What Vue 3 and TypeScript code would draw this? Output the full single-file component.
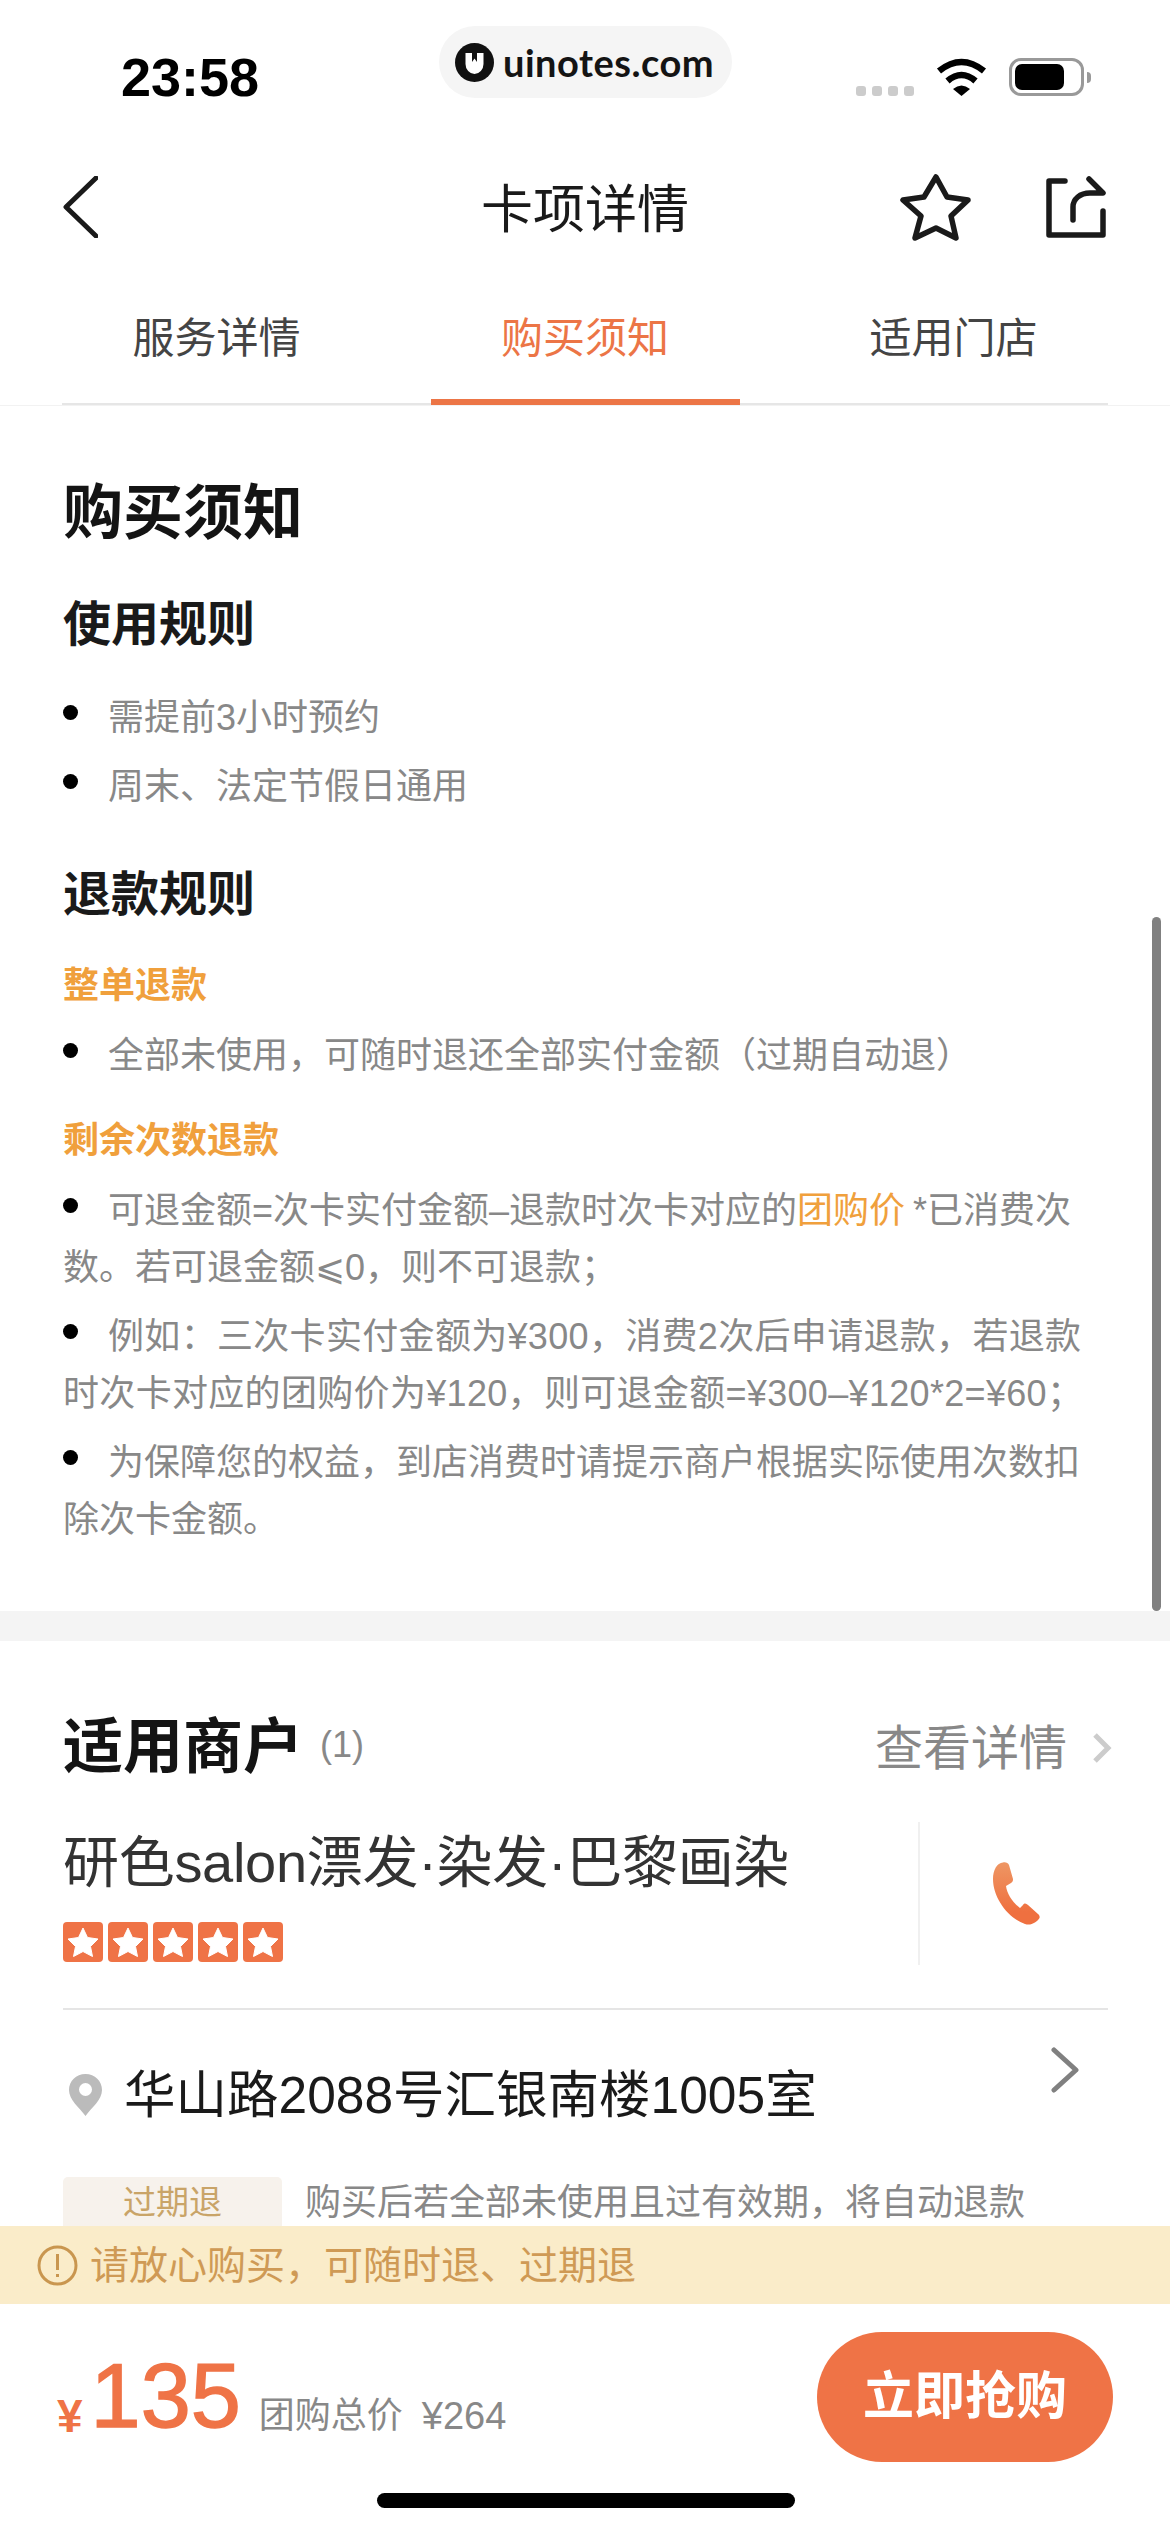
<template>
  <div class="page">
    <div class="watermark">
      <svg class="logo" width="39" height="39" viewBox="0 0 39 39">
        <circle cx="19.5" cy="19.5" r="19.5" fill="#111" />
        <path d="M10.5 10H17V19L19.5 15.5L22 19V10H28.5V21A9 10 0 0 1 10.5 21Z" fill="#fff" />
      </svg>
      <span>uinotes.com</span>
    </div>

    <div class="status-bar">
      <span class="time">23:58</span>
      <div class="status-icons">
        <div class="signal"><i v-for="n in 4" :key="n"></i></div>
        <svg width="51" height="38" viewBox="0 0 51 38">
          <path d="M3 13Q25.500 -5 48 13" fill="none" stroke="#000" stroke-width="6.500" />
          <path d="M11.500 23Q25.500 11 39.500 23" fill="none" stroke="#000" stroke-width="6.500" />
          <path d="M17 31Q25.500 24 34 31L25.500 38Z" fill="#000" />
        </svg>
        <div class="battery"><div class="level"></div></div>
      </div>
    </div>

    <div class="nav">
      <svg width="35" height="62" viewBox="0 0 35 62">
        <path d="M33 2L3 31L33 60" fill="none" stroke="#1a1a1a" stroke-width="5" stroke-linecap="round" stroke-linejoin="round" />
      </svg>
      <span class="nav-title">卡项详情</span>
      <div class="nav-actions">
        <svg width="71" height="67" viewBox="0 0 71 67">
          <path d="M36 3L47 23L68 26L51 42L56 64L36 54L15 64L21 42L3 26L24 23Z" fill="none" stroke="#1a1a1a" stroke-width="5.500" stroke-linejoin="round" />
        </svg>
        <svg width="60" height="62" viewBox="0 0 60 62">
          <path d="M19 5H3V59H57V35" fill="none" stroke="#1a1a1a" stroke-width="5.500" stroke-linecap="round" stroke-linejoin="round" />
          <path d="M43 3L57 17H44C34 17 27 23 27 31V44" fill="none" stroke="#1a1a1a" stroke-width="5.500" stroke-linecap="round" stroke-linejoin="round" />
        </svg>
      </div>
    </div>

    <div class="tabs">
      <div v-for="t in tabs" :key="t" :class="['tab', { active: t === activeTab }]">{{ t }}</div>
    </div>

    <div class="content">
      <div class="scrollbar"></div>

      <section class="notice">
        <h2 class="big-title">购买须知</h2>
        <h3 class="rule-title first">使用规则</h3>
        <ul class="rules rules-first">
          <li><i class="dot"></i>需提前3小时预约</li>
          <li><i class="dot"></i>周末、法定节假日通用</li>
        </ul>
        <h3 class="rule-title second">退款规则</h3>
        <div class="sub-title whole">整单退款</div>
        <ul class="rules">
          <li><i class="dot"></i>全部未使用，可随时退还全部实付金额（过期自动退）</li>
        </ul>
        <div class="sub-title rest">剩余次数退款</div>
        <ul class="rules">
          <li><i class="dot"></i>可退金额=次卡实付金额–退款时次卡对应的<span class="hl">团购价</span>*已消费次数。若可退金额⩽0，则不可退款；</li>
          <li class="spaced"><i class="dot"></i>例如：三次卡实付金额为¥300，消费2次后申请退款，若退款时次卡对应的团购价为¥120，则可退金额=¥300–¥120*2=¥60；</li>
          <li><i class="dot"></i>为保障您的权益，到店消费时请提示商户根据实际使用次数扣除次卡金额。</li>
        </ul>
      </section>

      <div class="band"></div>

      <section class="merchant">
        <div class="merchant-head">
          <h2 class="big-title">适用商户</h2>
          <span class="count">(1)</span>
          <span class="more">查看详情</span>
          <svg class="more-arrow" width="20" height="30" viewBox="0 0 20 30">
            <path d="M3 2L16 15L3 28" fill="none" stroke="#ccc" stroke-width="5" />
          </svg>
        </div>

        <div class="shop">
          <div class="shop-info">
            <div class="shop-name">研色salon漂发·染发·巴黎画染</div>
            <div class="stars">
              <span v-for="n in 5" :key="n" class="star">
                <svg width="32" height="30" viewBox="0 0 32 30">
                  <path d="M16 1L20.500 10.500L31 12L23.500 19.500L25.500 29.500L16 24.500L6.500 29.500L8.500 19.500L1 12L11.500 10.500Z" fill="#fff" stroke="#fff" stroke-linejoin="round" />
                </svg>
              </span>
            </div>
          </div>
          <div class="phone">
            <svg width="47" height="63" viewBox="0 0 47 63">
              <defs>
                <linearGradient id="phoneFill" x1="0" y1="0" x2="0" y2="1">
                  <stop offset="0" stop-color="#ee9663" />
                  <stop offset="0.8" stop-color="#ef7040" />
                </linearGradient>
              </defs>
              <path d="M10 0.500C4 1 0 8 0 17C0 36 15 56 32 62C38 64 44 60 46.500 56C47 54 46 53 45 52L35 43C33 41 31 41 30 43L27 46C20 41 14 32 13 24L18 21C20 20 20 18 20 17L16 3C15 1 13 0 10 0.500Z" fill="url(#phoneFill)" />
            </svg>
          </div>
        </div>

        <div class="address">
          <svg width="33" height="42" viewBox="0 0 33 42">
            <path fill-rule="evenodd" d="M16.500 0C7 0 0 7 0 16C0 26 10 33 16.500 42C23 33 33 26 33 16C33 7 26 0 16.500 0ZM16.500 9A6.500 6.500 0 1 1 16.500 22A6.500 6.500 0 1 1 16.500 9Z" fill="#bbb" />
          </svg>
          <span class="address-text">华山路2088号汇银南楼1005室</span>
          <svg class="address-arrow" width="28" height="46" viewBox="0 0 28 46">
            <path d="M3 3L25 23L3 43" fill="none" stroke="#808080" stroke-width="5" stroke-linecap="round" stroke-linejoin="round" />
          </svg>
        </div>

        <div class="refund-row">
          <span class="refund-badge">过期退</span>
          <span class="refund-text">购买后若全部未使用且过有效期，将自动退款</span>
        </div>
      </section>
    </div>

    <div class="assure">
      <svg width="41" height="41" viewBox="0 0 41 41">
        <circle cx="20.500" cy="20.500" r="18.500" fill="none" stroke="#c9964f" stroke-width="3" />
        <path d="M20.500 9V25M20.500 29V32" fill="none" stroke="#c9964f" stroke-width="3" />
      </svg>
      <span class="assure-text">请放心购买，可随时退、过期退</span>
    </div>

    <div class="buy-bar">
      <div class="price">
        <span class="currency">¥</span>
        <span class="amount">135</span>
        <span class="price-label">团购总价</span>
        <span class="price-total">¥264</span>
      </div>
      <div class="buy-btn">立即抢购</div>
      <div class="home-indicator"></div>
    </div>
  </div>
</template>

<script setup lang="ts">
const tabs = ['服务详情', '购买须知', '适用门店'];
const activeTab = '购买须知';
</script>

<style>
html, body {
  margin: 0;
  background: #fff;
}
</style>

<style scoped>
.page {
  position: relative;
  width: 1170px;
  height: 2532px;
  overflow: hidden;
  display: flex;
  flex-direction: column;
  background: #fff;
  font-family: "Liberation Sans", "Noto Sans CJK SC", sans-serif;
}

.watermark {
  position: absolute;
  left: 439px;
  top: 26px;
  width: 293px;
  height: 72px;
  box-sizing: border-box;
  padding-left: 16px;
  display: flex;
  align-items: center;
  gap: 9px;
  border-radius: 36px;
  background: #f5f5f5;
  font-family: Lato, sans-serif;
  font-size: 38px;
  font-weight: 700;
  letter-spacing: 0.5px;
  color: #141414;
}

.status-bar {
  height: 140px;
  flex: none;
  box-sizing: border-box;
  padding: 58px 86px 0 121px;
  display: flex;
  justify-content: space-between;
  align-items: flex-start;
}

.time {
  font-size: 54px;
  font-weight: 700;
  line-height: 39px;
  color: #000;
}

.status-icons {
  display: flex;
  align-items: flex-end;
  gap: 22px;
  height: 38px;
}

.signal {
  display: flex;
  gap: 6px;
}

.signal i {
  width: 10px;
  height: 10px;
  border-radius: 3px;
  background: #ccc;
}

.battery {
  position: relative;
  width: 75px;
  height: 38px;
  box-sizing: border-box;
  padding: 3px;
  border: 3px solid #999;
  border-radius: 12px;
}

.battery::after {
  content: "";
  position: absolute;
  right: -10px;
  top: 11px;
  width: 4px;
  height: 11px;
  border-radius: 0 5px 5px 0;
  background: #999;
}

.level {
  width: 49px;
  height: 26px;
  border-radius: 7px;
  background: #000;
}

.nav {
  height: 140px;
  flex: none;
  box-sizing: border-box;
  padding: 0 64px 6px 63px;
  display: flex;
  align-items: center;
  justify-content: space-between;
  position: relative;
}

.nav-title {
  position: absolute;
  left: 0;
  right: 0;
  margin-top: -4px;
  text-align: center;
  font-size: 52px;
  color: #1a1a1a;
}

.nav-actions {
  display: flex;
  align-items: center;
  gap: 75px;
}

.tabs {
  height: 125px;
  flex: none;
  margin: 0 62px;
  box-sizing: border-box;
  border-bottom: 2px solid #e6e6e6;
  display: flex;
  justify-content: space-between;
}

.tab {
  width: 309px;
  height: 125px;
  box-sizing: border-box;
  padding-top: 29px;
  text-align: center;
  font-size: 42px;
  line-height: 60px;
  color: #444;
}

.tab.active {
  color: #ec7546;
  border-bottom: 6px solid #ec7546;
}

.content {
  position: relative;
  flex: 1;
  min-height: 0;
  overflow: hidden;
  border-top: 1px solid #f2f2f2;
}

.scrollbar {
  position: absolute;
  right: 9px;
  top: 511px;
  width: 9px;
  height: 694px;
  border-radius: 5px;
  background: #808080;
  z-index: 1;
}

.notice {
  padding: 68px 62px 63px 63px;
}

.big-title {
  margin: 0;
  font-size: 60px;
  line-height: 80px;
  font-weight: 700;
  color: #141414;
}

.rule-title {
  margin: 0;
  font-size: 48px;
  line-height: 64px;
  font-weight: 700;
  color: #1a1a1a;
}

.rule-title.first { margin-top: 39px; }
.rule-title.second { margin-top: 48px; }

.rules {
  margin: 13px 0 0;
  padding: 0;
  list-style: none;
}

.rules-first {
  margin-top: 32px;
}

.rules li {
  font-size: 36px;
  line-height: 57px;
  color: #888;
}

.rules li + li {
  margin-top: 12px;
}

.rules li.spaced {
  letter-spacing: 0.32px;
}

.dot {
  display: inline-block;
  width: 15px;
  height: 15px;
  margin-right: 30px;
  border-radius: 50%;
  background: #000;
  vertical-align: 0.27em;
}

.hl {
  margin-right: 8px;
  color: #f0a03c;
}

.sub-title {
  font-size: 36px;
  line-height: 57px;
  font-weight: 700;
  color: #f0a03c;
}

.sub-title.whole { margin-top: 30px; }
.sub-title.rest { margin-top: 28px; }

.band {
  height: 30px;
  background: #f4f4f4;
}

.merchant {
  padding: 67px 62px 0 63px;
}

.merchant-head {
  display: flex;
  align-items: center;
}

.count {
  margin-left: 17px;
  margin-top: -6px;
  font-size: 36px;
  color: #888;
}

.more {
  margin-left: auto;
  margin-top: -9px;
  font-size: 48px;
  color: #888;
}

.more-arrow {
  margin-left: 25px;
  margin-right: -4px;
}

.shop {
  margin-top: 34px;
  height: 143px;
  display: flex;
  justify-content: space-between;
}

.shop-name {
  margin-top: 6px;
  font-size: 56px;
  line-height: 70px;
  letter-spacing: -0.3px;
  color: #333;
}

.stars {
  margin-top: 24px;
  display: flex;
  gap: 5px;
}

.star {
  width: 40px;
  height: 40px;
  border-radius: 4px;
  background: #ef7346;
  display: flex;
  align-items: center;
  justify-content: center;
}

.phone {
  width: 190px;
  box-sizing: border-box;
  border-left: 2px solid #f0f0f0;
  padding: 40px 0 0 73px;
}

.address {
  margin-top: 43px;
  padding-top: 50px;
  border-top: 2px solid #e5e5e5;
  display: flex;
  align-items: center;
  position: relative;
  color: #1a1a1a;
}

.address svg:first-child {
  margin-left: 6px;
}

.address-text {
  margin-left: 22px;
  font-size: 51.5px;
  line-height: 70px;
}

.address-arrow {
  position: absolute;
  right: 29px;
  top: 37px;
}

.refund-row {
  margin-top: 47px;
  display: flex;
  align-items: flex-start;
  gap: 23px;
}

.refund-badge {
  width: 219px;
  height: 80px;
  box-sizing: border-box;
  border-radius: 5px;
  background: #f7f2ec;
  text-align: center;
  font-size: 33px;
  line-height: 52px;
  color: #c9a468;
}

.refund-text {
  font-size: 36px;
  line-height: 52px;
  color: #888;
}

.assure {
  position: relative;
  z-index: 1;
  height: 78px;
  flex: none;
  box-sizing: border-box;
  padding: 0 0 0 37px;
  display: flex;
  align-items: center;
  gap: 12px;
  background: #faecc9;
  font-size: 39px;
  color: #cf9a55;
}

.assure-text {
  margin-top: -7px;
}

.buy-bar {
  position: relative;
  height: 228px;
  flex: none;
  box-sizing: border-box;
  padding: 28px 57px 0;
  display: flex;
  align-items: flex-start;
  justify-content: space-between;
  background: #fff;
}

.price {
  height: 130px;
  display: flex;
  align-items: flex-end;
  color: #ef7346;
}

.currency {
  margin-bottom: 16px;
  font-size: 46px;
  font-weight: 700;
  line-height: 60px;
}

.amount {
  margin-left: 8px;
  margin-bottom: 3px;
  font-size: 90px;
  line-height: 126px;
  -webkit-text-stroke: 1.5px #ef7346;
}

.price-label {
  margin-left: 18px;
  margin-bottom: 16px;
  font-size: 36px;
  line-height: 60px;
  color: #888;
}

.price-total {
  margin-left: 19px;
  margin-bottom: 16px;
  font-size: 38px;
  line-height: 60px;
  color: #888;
}

.buy-btn {
  width: 296px;
  height: 130px;
  border-radius: 65px;
  background: #ef7346;
  text-align: center;
  font-size: 51px;
  font-weight: 700;
  line-height: 130px;
  color: #fff;
}

.home-indicator {
  position: absolute;
  left: 377px;
  top: 189px;
  width: 418px;
  height: 15px;
  border-radius: 8px;
  background: #000;
}
</style>
